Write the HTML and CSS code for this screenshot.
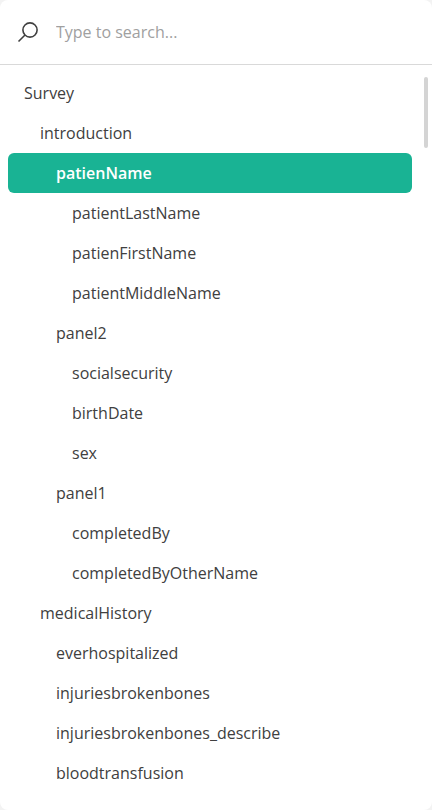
FILE: index.html
```html
<!DOCTYPE html>
<html lang="en">
<head>
<meta charset="utf-8">
<title>Survey structure</title>
<link rel="stylesheet" href="styles.css">
</head>
<body>
<div class="popup">
  <div class="search">
    <svg class="search-icon" width="24" height="24" viewBox="0 0 24 24" fill="none" stroke="#404040" stroke-width="1.6">
      <circle cx="14" cy="10" r="7.1"/>
      <path d="M9 15L2.5 21.5"/>
    </svg>
    <input class="search-input" type="text" placeholder="Type to search...">
  </div>
  <div class="body">
    <ul class="list">
      <li class="item l1">Survey</li>
      <li class="item l2">introduction</li>
      <li class="item l3 selected">patienName</li>
      <li class="item l4">patientLastName</li>
      <li class="item l4">patienFirstName</li>
      <li class="item l4">patientMiddleName</li>
      <li class="item l3">panel2</li>
      <li class="item l4">socialsecurity</li>
      <li class="item l4">birthDate</li>
      <li class="item l4">sex</li>
      <li class="item l3">panel1</li>
      <li class="item l4">completedBy</li>
      <li class="item l4">completedByOtherName</li>
      <li class="item l2">medicalHistory</li>
      <li class="item l3">everhospitalized</li>
      <li class="item l3">injuriesbrokenbones</li>
      <li class="item l3">injuriesbrokenbones_describe</li>
      <li class="item l3">bloodtransfusion</li>
    </ul>
    <div class="scrollbar"></div>
  </div>
</div>
</body>
</html>
```

FILE: styles.css
```css
body {
  margin: 0;
  background: #f3f3f3;
  font-family: "Open Sans", sans-serif;
  font-size: 16px;
  color: #404040;
}
.popup {
  display: flex;
  flex-direction: column;
  height: 810px;
  border-radius: 8px;
  background: #fff;
  overflow: hidden;
}
.search {
  display: flex;
  align-items: center;
  gap: 16px;
  box-sizing: border-box;
  height: 65px;
  padding: 0 16px;
  border-bottom: 1px solid #d9d9d9;
}
.search-input {
  flex: 1;
  padding: 0;
  border: 0;
  outline: 0;
  background: transparent;
  font: inherit;
  color: inherit;
}
.search-input::placeholder {
  color: #a0a0a0;
}
.body {
  display: flex;
  flex: 1;
}
.list {
  flex: 1;
  margin: 0;
  padding: 8px;
  list-style: none;
}
.item {
  height: 40px;
  line-height: 40px;
  border-radius: 6px;
}
.l1 { padding-left: 16px; }
.l2 { padding-left: 32px; }
.l3 { padding-left: 48px; }
.l4 { padding-left: 64px; }
.selected {
  background: #19b394;
  color: #fff;
  font-weight: 600;
}
.scrollbar {
  width: 4px;
  height: 71px;
  margin: 12px 4px 0 4px;
  border-radius: 2px;
  background: #d4d4d4;
}
```
